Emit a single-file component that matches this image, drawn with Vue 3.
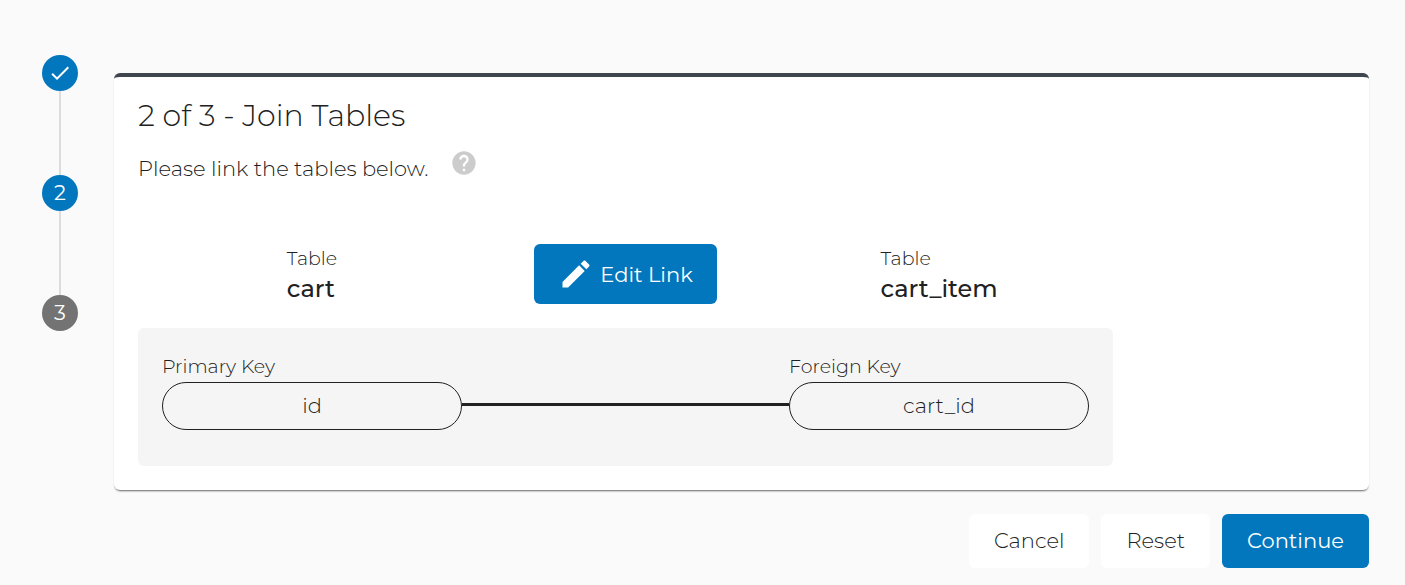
<template>
  <div class="join-page">
    <ol class="stepper">
      <li v-for="step in steps" :key="step.number" class="step">
        <span class="step-dot" :class="{ pending: step.pending }">
          <svg v-if="step.done" viewBox="0 0 24 24" width="24" height="24" role="img" aria-label="Done">
            <path d="M9 16.17 4.83 12l-1.42 1.41L9 19 21 7l-1.41-1.41z" fill="currentColor" />
          </svg>
          <template v-else>{{ step.number }}</template>
        </span>
      </li>
    </ol>

    <main class="content">
      <section class="card">
        <h1>2 of 3 - Join Tables</h1>
        <div class="intro">
          <p>Please link the tables below.</p>
          <button type="button" class="help" aria-label="Help">
            <svg viewBox="0 0 24 24" width="28" height="28">
              <path
                d="M12 2C6.48 2 2 6.48 2 12s4.48 10 10 10 10-4.48 10-10S17.52 2 12 2zm1 17h-2v-2h2v2zm2.07-7.75-.9.92C13.45 12.9 13 13.5 13 15h-2v-.5c0-1.1.45-2.1 1.17-2.83l1.24-1.26c.37-.36.59-.86.59-1.41 0-1.1-.9-2-2-2s-2 .9-2 2H8c0-2.21 1.79-4 4-4s4 1.79 4 4c0 .88-.36 1.68-.93 2.25z"
                fill="currentColor"
              />
            </svg>
          </button>
        </div>

        <div class="link">
          <div class="tables">
            <div class="table-name">
              <span class="label">Table</span>
              <strong>cart</strong>
            </div>
            <button type="button" class="btn primary edit">
              <svg viewBox="0 0 24 24" width="36" height="36" aria-hidden="true">
                <path
                  d="M3 17.25V21h3.75L17.81 9.94l-3.75-3.75L3 17.25zM20.71 7.04c.39-.39.39-1.02 0-1.41l-2.34-2.34c-.39-.39-1.02-.39-1.41 0l-1.83 1.83 3.75 3.75 1.83-1.83z"
                  fill="currentColor"
                />
              </svg>
              Edit Link
            </button>
            <div class="table-name">
              <span class="label">Table</span>
              <strong>cart_item</strong>
            </div>
          </div>

          <div class="keys">
            <div class="key">
              <span class="label">Primary Key</span>
              <div class="pill">id</div>
            </div>
            <div class="connector"></div>
            <div class="key">
              <span class="label">Foreign Key</span>
              <div class="pill">cart_id</div>
            </div>
          </div>
        </div>
      </section>

      <div class="actions">
        <button type="button" class="btn">Cancel</button>
        <button type="button" class="btn">Reset</button>
        <button type="button" class="btn primary">Continue</button>
      </div>
    </main>
  </div>
</template>

<script setup>
const steps = [
  { number: 1, done: true },
  { number: 2 },
  { number: 3, pending: true }
]
</script>

<style>
body {
  background-color: #fafafa;
}
</style>

<style scoped>
.join-page {
  display: flex;
  align-items: flex-start;
  gap: 36px;
  padding: 55px 36px 16px 42px;
  font-family: Montserrat, Inter, sans-serif;
  font-size: 21px;
  font-weight: 300;
  color: #212121;
}

.stepper {
  list-style: none;
  margin: 0;
  padding: 0;
}

.step + .step::before {
  content: '';
  display: block;
  width: 2px;
  height: 84px;
  margin: 0 auto;
  background-color: #dcdcdc;
}

.step-dot {
  display: flex;
  align-items: center;
  justify-content: center;
  width: 36px;
  height: 36px;
  border-radius: 50%;
  background-color: #0277bd;
  color: #fff;
  font-weight: 400;
  line-height: 24px;
}

.step-dot.pending {
  background-color: #737373;
}

.content {
  flex: 1;
  min-width: 0;
  padding-top: 18px;
}

.card {
  padding: 20px 24px 24px;
  border-top: 4px solid #40464d;
  border-radius: 6px;
  background-color: #fff;
  box-shadow: 0 2px 2px -1px rgba(0, 0, 0, 0.6);
}

h1 {
  margin: 0 0 14px;
  font-size: 30px;
  font-weight: 300;
  line-height: 38px;
}

.intro {
  display: flex;
  gap: 22px;
  height: 36px;
  margin-bottom: 59px;
}

.intro p {
  margin: 4px 0 0;
  line-height: 32px;
}

.help {
  width: 28px;
  height: 28px;
  padding: 0;
  border: 0;
  background: none;
  color: #ccc;
  cursor: pointer;
}

.help svg {
  display: block;
}

.link {
  max-width: 975px;
}

.tables {
  display: grid;
  grid-template-columns: 300px 1fr 300px;
  align-items: center;
  justify-items: center;
  padding: 0 24px;
  margin-bottom: 24px;
}

.table-name {
  display: flex;
  flex-direction: column;
}

.label {
  font-size: 19px;
  line-height: 30px;
}

.table-name strong {
  font-size: 24px;
  font-weight: 500;
  line-height: 30px;
}

.keys {
  display: flex;
  align-items: flex-end;
  padding: 24px 24px 36px;
  border-radius: 6px;
  background-color: #f5f5f5;
}

.key {
  display: flex;
  flex-direction: column;
  width: 300px;
}

.pill {
  box-sizing: border-box;
  height: 48px;
  border: 1px solid #212121;
  border-radius: 24px;
  line-height: 46px;
  text-align: center;
}

.connector {
  flex: 1;
  height: 3px;
  margin-bottom: 24px;
  background-color: #212121;
}

.actions {
  display: flex;
  justify-content: flex-end;
  gap: 12px;
  margin-top: 24px;
}

.btn {
  height: 54px;
  padding: 0 25px 2px;
  border: 0;
  border-radius: 6px;
  background-color: #fff;
  color: inherit;
  font: inherit;
  cursor: pointer;
}

.btn.primary {
  background-color: #0277bd;
  color: #fff;
  font-weight: 400;
}

.btn.edit {
  display: flex;
  align-items: center;
  gap: 6px;
  height: 60px;
  padding: 0 24px;
}
</style>
